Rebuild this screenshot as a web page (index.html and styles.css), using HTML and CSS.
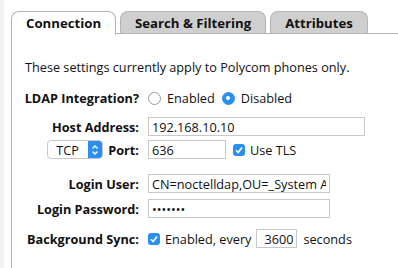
FILE: index.html
```html
<!DOCTYPE html>
<html lang="en">
<head>
    <meta charset="UTF-8">
    <title>LDAP Settings</title>
    <link rel="stylesheet" href="styles.css">
</head>
<body>
    <div class="tabs">
        <div class="tab active">Connection</div>
        <div class="tab">Search &amp; Filtering</div>
        <div class="tab">Attributes</div>
    </div>

    <div class="panel">
        <p class="note">These settings currently apply to Polycom phones only.</p>

        <div class="row row-ldap">
            <span class="label">LDAP Integration?</span>
            <div class="field">
                <label class="choice"><span class="radio"></span>Enabled</label>
                <label class="choice"><span class="radio checked"></span>Disabled</label>
            </div>
        </div>

        <div class="row row-host">
            <span class="label">Host Address:</span>
            <div class="field"><input type="text" class="input input-host" value="192.168.10.10"></div>
        </div>

        <div class="row row-port">
            <div class="label">
                <span class="select">TCP<span class="select-arrows">
                    <svg width="8" height="12" viewBox="0 0 8 12"><path d="M1.5 4.5 L4 2 L6.5 4.5 M1.5 7.5 L4 10 L6.5 7.5" fill="none" stroke="#fff" stroke-width="1.4"/></svg>
                </span></span>
                Port:
            </div>
            <div class="field">
                <input type="text" class="input input-port" value="636">
                <label class="choice"><span class="check">
                    <svg width="12" height="12" viewBox="0 0 12 12"><path d="M3 6.3 L5.2 8.5 L9 3.6" fill="none" stroke="#fff" stroke-width="1.6"/></svg>
                </span>Use TLS</label>
            </div>
        </div>

        <div class="row row-user">
            <span class="label">Login User:</span>
            <div class="field"><input type="text" class="input input-login" value="CN=noctelldap,OU=_System Accounts"></div>
        </div>

        <div class="row row-pass">
            <span class="label">Login Password:</span>
            <div class="field"><input type="password" class="input input-login" value="secret1"></div>
        </div>

        <div class="row row-sync">
            <span class="label">Background Sync:</span>
            <div class="field">
                <label class="choice"><span class="check">
                    <svg width="12" height="12" viewBox="0 0 12 12"><path d="M3 6.3 L5.2 8.5 L9 3.6" fill="none" stroke="#fff" stroke-width="1.6"/></svg>
                </span>Enabled, every</label>
                <input type="text" class="input input-sync" value="3600">
                <span>seconds</span>
            </div>
        </div>
    </div>
</body>
</html>
```

FILE: styles.css
```css
body {
    font-family: "Open Sans", sans-serif;
    font-size: 12.7px;
    color: #111;
    background-color: #fff;
    margin: 0;
    padding: 11px 0 0 7px;
    border-left: 4px solid #f3f3f3;
    height: 268px;
    box-sizing: border-box;
    overflow: hidden;
    display: flex;
    flex-direction: column;
}

.tabs {
    display: flex;
    gap: 4px;
    border-bottom: 1px solid #b5b5b5;
    height: 22px;
    flex-shrink: 0;
}

.tab {
    background-color: #cfcfcf;
    border: 1px solid #b5b5b5;
    border-bottom: none;
    border-radius: 8px 8px 0 0;
    font-weight: bold;
    font-size: 13.2px;
    line-height: 22px;
    padding: 0 14px;
}

.tab.active {
    background-color: #fff;
    height: 23px;
}

.panel {
    border-left: 1px solid #b5b5b5;
    flex: 1;
    min-height: 0;
    padding-top: 24px;
}

.note {
    margin: 0 0 0 13px;
}

.row {
    display: flex;
    align-items: center;
}

.label {
    width: 127px;
    text-align: right;
    font-weight: bold;
    flex-shrink: 0;
    display: flex;
    justify-content: flex-end;
    align-items: center;
}

.field {
    display: flex;
    align-items: center;
    margin-left: 9px;
}

.row-ldap { margin-top: 13px; }
.row-host { margin-top: 10px; }
.row-port { margin-top: 4px; }
.row-user { margin-top: 15px; }
.row-pass { margin-top: 6px; }
.row-sync { margin-top: 11px; }

.choice {
    display: flex;
    align-items: center;
    margin-right: 7px;
}

.radio {
    width: 13px;
    height: 13px;
    border: 1px solid #9a9a9a;
    border-radius: 50%;
    margin-right: 6px;
    box-sizing: border-box;
}

.radio.checked {
    background-color: #2b8ff0;
    border-color: #2b8ff0;
    position: relative;
}

.radio.checked::after {
    content: "";
    position: absolute;
    left: 3.5px;
    top: 3.5px;
    width: 4px;
    height: 4px;
    border-radius: 50%;
    background-color: #fff;
}

.check {
    width: 12px;
    height: 12px;
    border-radius: 3px;
    background-color: #2b8ff0;
    margin-right: 5px;
    display: flex;
}

.input {
    font-family: "Open Sans", sans-serif;
    font-size: 12.7px;
    color: #111;
    border: 1px solid #c8c8c8;
    height: 19px;
    padding: 0 3px;
    box-sizing: border-box;
    outline: none;
}

.input-host { width: 217px; }
.input-port { width: 78px; margin-right: 7px; }
.input-login { width: 182px; }
.input-sync { width: 41px; text-align: right; margin: 0 6px 0 -2px; }

.select {
    display: flex;
    align-items: center;
    font-weight: normal;
    border: 1px solid #c8c8c8;
    border-radius: 4px;
    height: 19px;
    box-sizing: border-box;
    width: 56px;
    padding-left: 8px;
    justify-content: space-between;
    margin-right: 5px;
    overflow: hidden;
}

.select-arrows {
    background-color: #2b8ff0;
    width: 14px;
    height: 19px;
    display: flex;
    align-items: center;
    justify-content: center;
}
```
